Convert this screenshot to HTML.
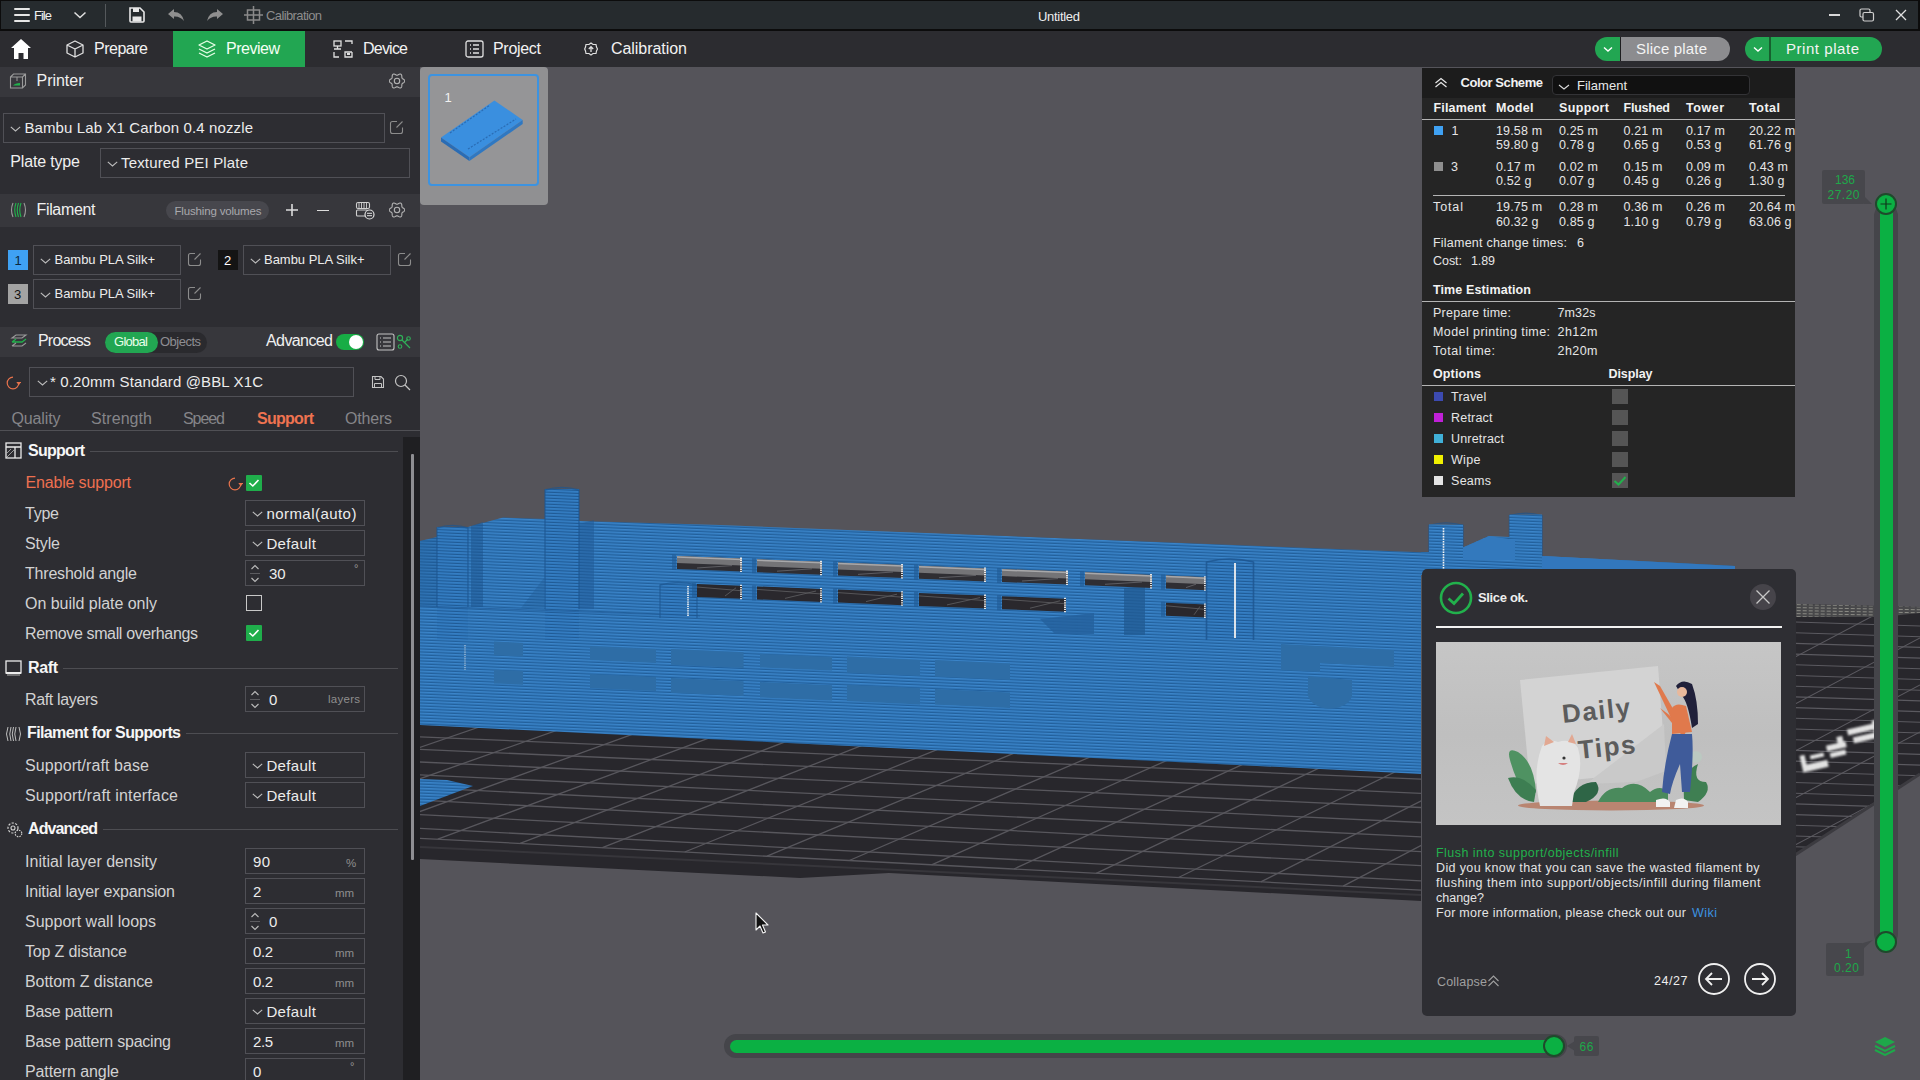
<!DOCTYPE html>
<html><head><meta charset="utf-8"><style>
html,body{margin:0;padding:0;width:1920px;height:1080px;overflow:hidden;background:#55545a;}
body{position:relative;font-family:"Liberation Sans",sans-serif;}
body>div,body>svg{position:absolute;}
</style></head><body>
<div style="left:420px;top:67px;width:1500px;height:1013px;background:#55545a;"></div>
<svg style="left:420px;top:67px;" width="1500" height="1013" viewBox="0 0 1500 1013"><defs>
<pattern id="st" width="40" height="3" patternUnits="userSpaceOnUse" patternTransform="rotate(2.4)">
<rect width="40" height="3" fill="#3b85ca"/><rect y="1.6" width="40" height="1.4" fill="#22609c"/></pattern>
<pattern id="st2" width="40" height="3" patternUnits="userSpaceOnUse" patternTransform="rotate(2.4)">
<rect width="40" height="3" fill="#3079bf"/><rect y="2" width="40" height="1" fill="#1d5690"/></pattern>
<clipPath id="bedclip"><polygon points="0.0,633.0 1001.0,683.0 1001.0,834.0 469.0,806.0 380.0,811.0 0.0,792.0"/></clipPath>
</defs><polygon points="0.0,633.0 1001.0,683.0 1001.0,834.0 469.0,806.0 380.0,811.0 0.0,792.0" fill="#28272c" /><g clip-path="url(#bedclip)" stroke="#58575d" stroke-width="1.3"><line x1="0" y1="669.8" x2="1001" y2="712.2"/><line x1="0" y1="682.4" x2="1001" y2="726.3"/><line x1="0" y1="695.0" x2="1001" y2="740.5"/><line x1="0" y1="707.8" x2="1001" y2="755.5"/><line x1="0" y1="720.7" x2="1001" y2="769.9"/><line x1="0" y1="733.2" x2="1001" y2="784.7"/><line x1="0" y1="747.6" x2="1001" y2="798.6"/><line x1="0" y1="761.4" x2="1001" y2="813.9"/><line x1="0" y1="771.3" x2="1001" y2="823.1"/><line x1="137.3" y1="633" x2="-229.1" y2="759.4"/><line x1="222.4" y1="633" x2="-146.8" y2="763.7"/><line x1="306.9" y1="633" x2="-64.5" y2="767.9"/><line x1="390.8" y1="633" x2="17.8" y2="772.2"/><line x1="474.3" y1="633" x2="100.1" y2="776.4"/><line x1="557.1" y1="633" x2="182.4" y2="780.7"/><line x1="639.4" y1="633" x2="264.7" y2="785.0"/><line x1="721.2" y1="633" x2="347.0" y2="789.2"/><line x1="802.5" y1="633" x2="429.3" y2="793.5"/><line x1="883.2" y1="633" x2="511.6" y2="797.8"/><line x1="963.5" y1="633" x2="593.9" y2="802.0"/><line x1="1043.2" y1="633" x2="676.2" y2="806.3"/><line x1="1122.4" y1="633" x2="758.5" y2="810.5"/><line x1="1201.1" y1="633" x2="840.8" y2="814.8"/><line x1="1279.3" y1="633" x2="923.1" y2="819.1"/><line x1="1357.0" y1="633" x2="1005.4" y2="823.3"/><line x1="1434.2" y1="633" x2="1087.7" y2="827.6"/></g><line x1="0.0" y1="780.0" x2="1001.0" y2="828.0" stroke="#37363b" stroke-width="2" clip-path="url(#bedclip)"/><polygon points="0.0,712.0 27.0,713.0 53.0,719.0 0.0,739.0" fill="url(#st)" /><polygon points="1375.0,537.0 1500.0,540.0 1500.0,707.0 1375.0,788.0" fill="#28272c" /><clipPath id="rbclip"><polygon points="1375.0,537.0 1500.0,540.0 1500.0,707.0 1375.0,788.0"/></clipPath><g clip-path="url(#rbclip)" stroke="#5b5a60" stroke-width="1.1"><line x1="1375" y1="555.0" x2="1500" y2="559.0"/><line x1="1375" y1="565.7" x2="1500" y2="569.7"/><line x1="1375" y1="576.4" x2="1500" y2="580.4"/><line x1="1375" y1="587.1" x2="1500" y2="591.1"/><line x1="1375" y1="597.8" x2="1500" y2="601.8"/><line x1="1375" y1="608.5" x2="1500" y2="612.5"/><line x1="1375" y1="619.2" x2="1500" y2="623.2"/><line x1="1375" y1="629.9" x2="1500" y2="633.9"/><line x1="1375" y1="640.6" x2="1500" y2="644.6"/><line x1="1375" y1="651.3" x2="1500" y2="655.3"/><line x1="1375" y1="662.0" x2="1500" y2="666.0"/><line x1="1375" y1="672.7" x2="1500" y2="676.7"/><line x1="1375" y1="683.4" x2="1500" y2="687.4"/><line x1="1375" y1="694.1" x2="1500" y2="698.1"/><line x1="1375" y1="704.8" x2="1500" y2="708.8"/><line x1="1375" y1="715.5" x2="1500" y2="719.5"/><line x1="1375" y1="726.2" x2="1500" y2="730.2"/><line x1="1375" y1="736.9" x2="1500" y2="740.9"/><line x1="1375" y1="747.6" x2="1500" y2="751.6"/><line x1="1375" y1="758.3" x2="1500" y2="762.3"/><line x1="1375" y1="769.0" x2="1500" y2="773.0"/><line x1="1375" y1="779.7" x2="1500" y2="783.7"/><line x1="1375" y1="449.0" x2="1500" y2="383.0"/><line x1="1375" y1="496.0" x2="1500" y2="430.0"/><line x1="1375" y1="543.0" x2="1500" y2="477.0"/><line x1="1375" y1="590.0" x2="1500" y2="524.0"/><line x1="1375" y1="637.0" x2="1500" y2="571.0"/><line x1="1375" y1="684.0" x2="1500" y2="618.0"/><line x1="1375" y1="731.0" x2="1500" y2="665.0"/><line x1="1375" y1="778.0" x2="1500" y2="712.0"/><line x1="1375" y1="825.0" x2="1500" y2="759.0"/></g><pattern id="fb" width="6" height="3" patternUnits="userSpaceOnUse" patternTransform="rotate(1)"><rect width="6" height="3" fill="#48484a"/><rect width="4" height="1" fill="#8a8a84"/></pattern><polygon points="1375.0,537.0 1500.0,540.0 1500.0,546.0 1460.0,550.0 1375.0,550.0" fill="url(#fb)" /><line x1="1375.0" y1="788.0" x2="1500.0" y2="707.0" stroke="#3c3b40" stroke-width="3" /><filter id="blr" x="-20%" y="-50%" width="140%" height="200%"><feGaussianBlur stdDeviation="1.3"/></filter><g transform="translate(1377,669) rotate(-13)" filter="url(#blr)" fill="#e2e2e2"><rect x="-2" y="30" width="26" height="7"/><rect x="-2" y="20" width="5" height="12"/><rect x="8" y="22" width="14" height="4"/><rect x="26" y="16" width="20" height="6"/><rect x="38" y="10" width="6" height="12"/><rect x="28" y="24" width="16" height="5"/><rect x="50" y="5" width="30" height="6"/><rect x="54" y="14" width="24" height="6"/><rect x="76" y="2" width="6" height="14"/></g><polygon points="0.0,474.0 17.0,470.0 17.0,460.0 48.0,460.0 83.0,450.5 125.0,452.0 125.0,422.0 159.0,422.0 159.0,454.0 300.0,458.0 1001.0,485.3 1001.0,707.0 0.0,658.0" fill="url(#st)" /><polygon points="17.0,460.0 48.0,460.0 48.0,573.0 17.0,573.0" fill="url(#st2)" opacity="0.55"/><polygon points="125.0,422.0 159.0,422.0 159.0,573.0 125.0,573.0" fill="url(#st2)" opacity="0.55"/><polygon points="51.0,459.0 63.0,455.0 63.0,540.0 51.0,540.0" fill="#1d5590" opacity="0.55"/><polygon points="159.0,457.0 174.0,453.0 174.0,542.0 159.0,542.0" fill="#1d5590" opacity="0.45"/><polygon points="0.0,474.0 17.0,470.0 17.0,539.0 0.0,539.0" fill="#1d5590" opacity="0.35"/><polygon points="101.0,541.0 124.0,511.0 124.0,541.0" fill="#1d5590" opacity="0.3"/><line x1="0" y1="539" x2="280" y2="549" stroke="#1d5590" stroke-width="1" opacity="0.6"/><polygon points="620.0,552.0 674.0,546.0 674.0,567.0 635.0,567.0" fill="#24609c" opacity="0.8"/><polygon points="704.0,521.0 725.0,519.0 725.0,568.0 704.0,568.0" fill="#1f5890" opacity="0.7"/><polygon points="240.0,517.0 277.0,517.0 277.0,551.0 240.0,551.0" fill="url(#st2)" opacity="0.55"/><path d="M240 551 V518 Q258 513 277 518 V551" fill="none" stroke="#1d5590" stroke-width="1.3" opacity="0.7"/><line x1="268.0" y1="519.0" x2="268.0" y2="549.0" stroke="#f4f4f4" stroke-width="1.6" stroke-dasharray="1.3 0.9"/><line x1="45.0" y1="578.0" x2="45.0" y2="603.0" stroke="#e8e8e8" stroke-width="1.2" stroke-dasharray="1.2 1" opacity="0.7"/><polygon points="257.0,489.0 322.0,491.6 322.0,504.6 257.0,502.0" fill="#2f2e33" /><polygon points="257.0,489.0 322.0,491.6 322.0,498.6 257.0,496.0" fill="#747477" /><line x1="257.0" y1="490.0" x2="322.0" y2="492.6" stroke="#a8a8aa" stroke-width="1.5"/><line x1="277.0" y1="501.0" x2="312.0" y2="498.6" stroke="#6a6a6e" stroke-width="0.8"/><line x1="321.0" y1="490.6" x2="321.0" y2="505.6" stroke="#f4f4f4" stroke-width="1.8" stroke-dasharray="1.3 0.9"/><rect x="252.0" y="488.0" width="4" height="15" fill="#1f5a95" opacity="0.6"/><polygon points="337.0,492.2 402.0,494.8 402.0,507.8 337.0,505.2" fill="#2f2e33" /><polygon points="337.0,492.2 402.0,494.8 402.0,501.8 337.0,499.2" fill="#747477" /><line x1="337.0" y1="493.2" x2="402.0" y2="495.8" stroke="#a8a8aa" stroke-width="1.5"/><line x1="357.0" y1="504.2" x2="392.0" y2="501.8" stroke="#6a6a6e" stroke-width="0.8"/><line x1="401.0" y1="493.8" x2="401.0" y2="508.8" stroke="#f4f4f4" stroke-width="1.8" stroke-dasharray="1.3 0.9"/><rect x="332.0" y="491.2" width="4" height="15" fill="#1f5a95" opacity="0.6"/><polygon points="418.0,495.4 483.0,498.0 483.0,511.0 418.0,508.4" fill="#2f2e33" /><polygon points="418.0,495.4 483.0,498.0 483.0,505.0 418.0,502.4" fill="#747477" /><line x1="418.0" y1="496.4" x2="483.0" y2="499.0" stroke="#a8a8aa" stroke-width="1.5"/><line x1="438.0" y1="507.4" x2="473.0" y2="505.0" stroke="#6a6a6e" stroke-width="0.8"/><line x1="482.0" y1="497.0" x2="482.0" y2="512.0" stroke="#f4f4f4" stroke-width="1.8" stroke-dasharray="1.3 0.9"/><rect x="413.0" y="494.4" width="4" height="15" fill="#1f5a95" opacity="0.6"/><polygon points="499.0,498.7 566.0,501.4 566.0,514.4 499.0,511.7" fill="#2f2e33" /><polygon points="499.0,498.7 566.0,501.4 566.0,508.4 499.0,505.7" fill="#747477" /><line x1="499.0" y1="499.7" x2="566.0" y2="502.4" stroke="#a8a8aa" stroke-width="1.5"/><line x1="519.0" y1="510.7" x2="556.0" y2="508.4" stroke="#6a6a6e" stroke-width="0.8"/><line x1="565.0" y1="500.4" x2="565.0" y2="515.4" stroke="#f4f4f4" stroke-width="1.8" stroke-dasharray="1.3 0.9"/><rect x="494.0" y="497.7" width="4" height="15" fill="#1f5a95" opacity="0.6"/><polygon points="582.0,502.0 648.0,504.6 648.0,517.6 582.0,515.0" fill="#2f2e33" /><polygon points="582.0,502.0 648.0,504.6 648.0,511.6 582.0,509.0" fill="#747477" /><line x1="582.0" y1="503.0" x2="648.0" y2="505.6" stroke="#a8a8aa" stroke-width="1.5"/><line x1="602.0" y1="514.0" x2="638.0" y2="511.6" stroke="#6a6a6e" stroke-width="0.8"/><line x1="647.0" y1="503.6" x2="647.0" y2="518.6" stroke="#f4f4f4" stroke-width="1.8" stroke-dasharray="1.3 0.9"/><rect x="577.0" y="501.0" width="4" height="15" fill="#1f5a95" opacity="0.6"/><polygon points="665.0,505.3 732.0,508.0 732.0,521.0 665.0,518.3" fill="#2f2e33" /><polygon points="665.0,505.3 732.0,508.0 732.0,515.0 665.0,512.3" fill="#747477" /><line x1="665.0" y1="506.3" x2="732.0" y2="509.0" stroke="#a8a8aa" stroke-width="1.5"/><line x1="685.0" y1="517.3" x2="722.0" y2="515.0" stroke="#6a6a6e" stroke-width="0.8"/><line x1="731.0" y1="507.0" x2="731.0" y2="522.0" stroke="#f4f4f4" stroke-width="1.8" stroke-dasharray="1.3 0.9"/><rect x="660.0" y="504.3" width="4" height="15" fill="#1f5a95" opacity="0.6"/><polygon points="746.0,508.6 786.0,510.2 786.0,523.2 746.0,521.6" fill="#2f2e33" /><polygon points="746.0,508.6 786.0,510.2 786.0,517.2 746.0,515.6" fill="#747477" /><line x1="746.0" y1="509.6" x2="786.0" y2="511.2" stroke="#a8a8aa" stroke-width="1.5"/><line x1="766.0" y1="520.6" x2="776.0" y2="517.2" stroke="#6a6a6e" stroke-width="0.8"/><line x1="785.0" y1="509.2" x2="785.0" y2="524.2" stroke="#f4f4f4" stroke-width="1.8" stroke-dasharray="1.3 0.9"/><rect x="741.0" y="507.6" width="4" height="15" fill="#1f5a95" opacity="0.6"/><polygon points="277.0,517.0 322.0,518.8 322.0,531.8 277.0,530.0" fill="#2a282d" /><line x1="277.0" y1="520.0" x2="322.0" y2="523.8" stroke="#5a5a5e" stroke-width="0.9"/><line x1="305.0" y1="529.0" x2="316.0" y2="520.8" stroke="#5a5a5e" stroke-width="0.9"/><line x1="321.0" y1="517.8" x2="321.0" y2="532.8" stroke="#f4f4f4" stroke-width="1.8" stroke-dasharray="1.3 0.9"/><rect x="272.0" y="516.0" width="4" height="15" fill="#1f5a95" opacity="0.6"/><polygon points="337.0,519.4 402.0,522.0 402.0,535.0 337.0,532.4" fill="#2a282d" /><line x1="337.0" y1="522.4" x2="402.0" y2="527.0" stroke="#5a5a5e" stroke-width="0.9"/><line x1="365.0" y1="531.4" x2="396.0" y2="524.0" stroke="#5a5a5e" stroke-width="0.9"/><line x1="401.0" y1="521.0" x2="401.0" y2="536.0" stroke="#f4f4f4" stroke-width="1.8" stroke-dasharray="1.3 0.9"/><rect x="332.0" y="518.4" width="4" height="15" fill="#1f5a95" opacity="0.6"/><polygon points="418.0,522.6 483.0,525.2 483.0,538.2 418.0,535.6" fill="#2a282d" /><line x1="418.0" y1="525.6" x2="483.0" y2="530.2" stroke="#5a5a5e" stroke-width="0.9"/><line x1="446.0" y1="534.6" x2="477.0" y2="527.2" stroke="#5a5a5e" stroke-width="0.9"/><line x1="482.0" y1="524.2" x2="482.0" y2="539.2" stroke="#f4f4f4" stroke-width="1.8" stroke-dasharray="1.3 0.9"/><rect x="413.0" y="521.6" width="4" height="15" fill="#1f5a95" opacity="0.6"/><polygon points="499.0,525.9 566.0,528.6 566.0,541.6 499.0,538.9" fill="#2a282d" /><line x1="499.0" y1="528.9" x2="566.0" y2="533.6" stroke="#5a5a5e" stroke-width="0.9"/><line x1="527.0" y1="537.9" x2="560.0" y2="530.6" stroke="#5a5a5e" stroke-width="0.9"/><line x1="565.0" y1="527.6" x2="565.0" y2="542.6" stroke="#f4f4f4" stroke-width="1.8" stroke-dasharray="1.3 0.9"/><rect x="494.0" y="524.9" width="4" height="15" fill="#1f5a95" opacity="0.6"/><polygon points="582.0,529.2 646.0,531.8 646.0,544.8 582.0,542.2" fill="#2a282d" /><line x1="582.0" y1="532.2" x2="646.0" y2="536.8" stroke="#5a5a5e" stroke-width="0.9"/><line x1="610.0" y1="541.2" x2="640.0" y2="533.8" stroke="#5a5a5e" stroke-width="0.9"/><line x1="645.0" y1="530.8" x2="645.0" y2="545.8" stroke="#f4f4f4" stroke-width="1.8" stroke-dasharray="1.3 0.9"/><rect x="577.0" y="528.2" width="4" height="15" fill="#1f5a95" opacity="0.6"/><polygon points="746.0,535.8 786.0,537.4 786.0,550.4 746.0,548.8" fill="#2a282d" /><line x1="746.0" y1="538.8" x2="786.0" y2="542.4" stroke="#5a5a5e" stroke-width="0.9"/><line x1="774.0" y1="547.8" x2="780.0" y2="539.4" stroke="#5a5a5e" stroke-width="0.9"/><line x1="785.0" y1="536.4" x2="785.0" y2="551.4" stroke="#f4f4f4" stroke-width="1.8" stroke-dasharray="1.3 0.9"/><rect x="741.0" y="534.8" width="4" height="15" fill="#1f5a95" opacity="0.6"/><polygon points="787.0,494.0 833.0,494.0 833.0,572.0 787.0,572.0" fill="url(#st2)" opacity="0.5"/><path d="M786.5 573 V495 Q810 489 833.5 495 V573" fill="none" stroke="#1d5590" stroke-width="1.6" opacity="0.8"/><path d="M17 540 V461 Q32.5 456 48 461 V540" fill="none" stroke="#1d5590" stroke-width="1.4" opacity="0.7"/><path d="M125 542 V423 Q142.0 418 159 423 V542" fill="none" stroke="#1d5590" stroke-width="1.4" opacity="0.7"/><path d="M1009 503 V458.4 Q1026.0 453.4 1043 458.4 V503" fill="none" stroke="#1d5590" stroke-width="1.4" opacity="0.7"/><path d="M1089.5 489 V448.6 Q1105.75 443.6 1122 448.6 V489" fill="none" stroke="#1d5590" stroke-width="1.4" opacity="0.7"/><line x1="815.0" y1="496.0" x2="815.0" y2="571.0" stroke="#f0f0f0" stroke-width="1.8" /><polygon points="74.0,574.6 103.0,575.9 103.0,589.6 74.0,588.3" fill="#2e6da6" /><polygon points="170.0,579.0 236.0,582.0 236.0,596.0 170.0,593.0" fill="#2e6da6" /><polygon points="251.0,582.0 323.6,585.3 323.6,601.0 251.0,597.7" fill="#2e6da6" /><polygon points="340.0,586.8 412.0,590.0 412.0,603.6 340.0,600.4" fill="#2e6da6" /><polygon points="427.0,589.6 500.0,592.9 500.0,609.0 427.0,605.7" fill="#2e6da6" /><polygon points="515.0,593.0 590.0,596.4 590.0,613.0 515.0,609.6" fill="#2e6da6" /><polygon points="74.0,602.7 103.0,604.0 103.0,617.7 74.0,616.4" fill="#2e6da6" /><polygon points="170.0,607.0 236.0,610.0 236.0,624.0 170.0,621.0" fill="#2e6da6" /><polygon points="251.0,611.0 323.6,614.3 323.6,629.0 251.0,625.7" fill="#2e6da6" /><polygon points="340.0,615.0 412.0,618.2 412.0,633.6 340.0,630.4" fill="#2e6da6" /><polygon points="427.0,617.7 500.0,621.0 500.0,637.4 427.0,634.1" fill="#2e6da6" /><polygon points="515.0,622.0 590.0,625.4 590.0,641.0 515.0,637.6" fill="#2e6da6" /><polygon points="861.0,577.0 974.0,583.0 974.0,600.0 900.0,596.0 900.0,605.0 861.0,603.0" fill="#2e6da6" /><path d="M888 623 A20 14 0 0 0 932 629 L932 613 L888 609 Z" fill="#2e6da6"/><polygon points="1001.0,485.0 1009.0,485.0 1009.0,457.4 1043.0,457.4 1043.0,480.5 1069.0,469.0 1089.5,470.0 1089.5,447.6 1122.0,447.6 1122.0,489.0 1315.0,499.0 1315.0,508.0 1001.0,508.0" fill="url(#st)" /><polygon points="1122.0,489.0 1315.0,499.0 1315.0,508.0 1122.0,508.0" fill="#3277bd" /><polygon points="1043.0,480.5 1069.0,469.0 1095.0,473.0 1095.0,493.0 1043.0,493.0" fill="#3379bd" /><line x1="1023.5" y1="461.0" x2="1023.5" y2="503.0" stroke="#f4f4f4" stroke-width="1.6" stroke-dasharray="1.6 1"/></svg>
<div style="left:420px;top:67px;width:128px;height:138px;background:#909092;border-radius:4px"></div>
<div style="left:428px;top:74px;width:111px;height:112px;box-sizing:border-box;border:2.5px solid #3d93e0;border-radius:4px;background:#959597"></div>
<div style="left:444.50px;top:91px;font-size:13px;line-height:13px;color:#f2f2f2;white-space:pre;">1</div>
<svg style="left:438px;top:97px;" width="88" height="68" viewBox="0 0 88 68"><polygon points="3,40.6 56.4,3.5 84.7,23 31.4,60.2" fill="#3a8fdf"/><polygon points="3,40.6 31.4,60.2 31.4,64 3,44.6" fill="#2a6cb4"/><polygon points="31.4,60.2 84.7,23 84.7,27 31.4,64" fill="#2f78c2"/><path d="M12 36 L52 8 M30 52 L78 22" stroke="#2a6cb4" stroke-width="1.2" stroke-dasharray="2 1.5"/></svg>
<div style="left:1422px;top:68px;width:373px;height:429px;background:#252525;"></div>
<div style="left:1422px;top:68px;width:373px;height:30px;background:#1c1c1c;"></div>
<svg style="left:1434px;top:77px;" width="14" height="11" viewBox="0 0 14 11"><path d="M1.5 6 L7 1.5 L12.5 6 M1.5 10 L7 5.5 L12.5 10" fill="none" stroke="#e8e8e8" stroke-width="1.2"/></svg>
<div style="left:1460.50px;top:76px;font-size:13px;line-height:13px;color:#f2f2f2;font-weight:bold;letter-spacing:-0.447px;white-space:pre;">Color Scheme</div>
<div style="left:1552px;top:75px;width:198px;height:20px;box-sizing:border-box;border:1px solid #333336;border-radius:4px;background:#111111"></div>
<svg style="left:1558px;top:84px;" width="12" height="6" viewBox="0 0 12 6"><path d="M1 1 L6 5 L11 1" fill="none" stroke="#dddddd" stroke-width="1.1"/></svg>
<div style="left:1577.00px;top:79px;font-size:13px;line-height:13px;color:#e8e8e8;letter-spacing:0.021px;white-space:pre;">Filament</div>
<div style="left:1433.60px;top:102px;font-size:12.5px;line-height:12.5px;color:#f2f2f2;font-weight:bold;letter-spacing:0.143px;white-space:pre;">Filament</div>
<div style="left:1496.00px;top:102px;font-size:12.5px;line-height:12.5px;color:#f2f2f2;font-weight:bold;letter-spacing:0.348px;white-space:pre;">Model</div>
<div style="left:1559.00px;top:102px;font-size:12.5px;line-height:12.5px;color:#f2f2f2;font-weight:bold;letter-spacing:0.349px;white-space:pre;">Support</div>
<div style="left:1623.50px;top:102px;font-size:12.5px;line-height:12.5px;color:#f2f2f2;font-weight:bold;letter-spacing:-0.237px;white-space:pre;">Flushed</div>
<div style="left:1686.00px;top:102px;font-size:12.5px;line-height:12.5px;color:#f2f2f2;font-weight:bold;letter-spacing:0.529px;white-space:pre;">Tower</div>
<div style="left:1749.00px;top:102px;font-size:12.5px;line-height:12.5px;color:#f2f2f2;font-weight:bold;letter-spacing:0.517px;white-space:pre;">Total</div>
<div style="left:1422px;top:119px;width:373px;height:1px;background:#b4b4b4;"></div>
<div style="left:1434px;top:126px;width:9px;height:9px;background:#3fa1f3;"></div>
<div style="left:1451.50px;top:125px;font-size:12.5px;line-height:12.5px;color:#e6e6e6;white-space:pre;">1</div>
<div style="left:1434px;top:162px;width:9px;height:9px;background:#8f8f8f;"></div>
<div style="left:1451.00px;top:161px;font-size:12.5px;line-height:12.5px;color:#e6e6e6;white-space:pre;">3</div>
<div style="left:1433.00px;top:201px;font-size:12.5px;line-height:12.5px;color:#e6e6e6;letter-spacing:0.899px;white-space:pre;">Total</div>
<div style="left:1496.00px;top:125px;font-size:12.5px;line-height:12.5px;color:#e6e6e6;letter-spacing:0.151px;white-space:pre;">19.58 m</div>
<div style="left:1496.00px;top:139px;font-size:12.5px;line-height:12.5px;color:#e6e6e6;letter-spacing:0.139px;white-space:pre;">59.80 g</div>
<div style="left:1496.00px;top:161px;font-size:12.5px;line-height:12.5px;color:#e6e6e6;letter-spacing:0.153px;white-space:pre;">0.17 m</div>
<div style="left:1496.00px;top:175px;font-size:12.5px;line-height:12.5px;color:#e6e6e6;letter-spacing:0.139px;white-space:pre;">0.52 g</div>
<div style="left:1496.00px;top:201px;font-size:12.5px;line-height:12.5px;color:#e6e6e6;letter-spacing:0.151px;white-space:pre;">19.75 m</div>
<div style="left:1496.00px;top:216px;font-size:12.5px;line-height:12.5px;color:#e6e6e6;letter-spacing:0.139px;white-space:pre;">60.32 g</div>
<div style="left:1559.00px;top:125px;font-size:12.5px;line-height:12.5px;color:#e6e6e6;letter-spacing:0.153px;white-space:pre;">0.25 m</div>
<div style="left:1559.00px;top:139px;font-size:12.5px;line-height:12.5px;color:#e6e6e6;letter-spacing:0.139px;white-space:pre;">0.78 g</div>
<div style="left:1559.00px;top:161px;font-size:12.5px;line-height:12.5px;color:#e6e6e6;letter-spacing:0.153px;white-space:pre;">0.02 m</div>
<div style="left:1559.00px;top:175px;font-size:12.5px;line-height:12.5px;color:#e6e6e6;letter-spacing:0.139px;white-space:pre;">0.07 g</div>
<div style="left:1559.00px;top:201px;font-size:12.5px;line-height:12.5px;color:#e6e6e6;letter-spacing:0.153px;white-space:pre;">0.28 m</div>
<div style="left:1559.00px;top:216px;font-size:12.5px;line-height:12.5px;color:#e6e6e6;letter-spacing:0.139px;white-space:pre;">0.85 g</div>
<div style="left:1623.50px;top:125px;font-size:12.5px;line-height:12.5px;color:#e6e6e6;letter-spacing:0.153px;white-space:pre;">0.21 m</div>
<div style="left:1623.50px;top:139px;font-size:12.5px;line-height:12.5px;color:#e6e6e6;letter-spacing:0.139px;white-space:pre;">0.65 g</div>
<div style="left:1623.50px;top:161px;font-size:12.5px;line-height:12.5px;color:#e6e6e6;letter-spacing:0.153px;white-space:pre;">0.15 m</div>
<div style="left:1623.50px;top:175px;font-size:12.5px;line-height:12.5px;color:#e6e6e6;letter-spacing:0.139px;white-space:pre;">0.45 g</div>
<div style="left:1623.50px;top:201px;font-size:12.5px;line-height:12.5px;color:#e6e6e6;letter-spacing:0.153px;white-space:pre;">0.36 m</div>
<div style="left:1623.50px;top:216px;font-size:12.5px;line-height:12.5px;color:#e6e6e6;letter-spacing:0.139px;white-space:pre;">1.10 g</div>
<div style="left:1686.00px;top:125px;font-size:12.5px;line-height:12.5px;color:#e6e6e6;letter-spacing:0.153px;white-space:pre;">0.17 m</div>
<div style="left:1686.00px;top:139px;font-size:12.5px;line-height:12.5px;color:#e6e6e6;letter-spacing:0.139px;white-space:pre;">0.53 g</div>
<div style="left:1686.00px;top:161px;font-size:12.5px;line-height:12.5px;color:#e6e6e6;letter-spacing:0.153px;white-space:pre;">0.09 m</div>
<div style="left:1686.00px;top:175px;font-size:12.5px;line-height:12.5px;color:#e6e6e6;letter-spacing:0.139px;white-space:pre;">0.26 g</div>
<div style="left:1686.00px;top:201px;font-size:12.5px;line-height:12.5px;color:#e6e6e6;letter-spacing:0.153px;white-space:pre;">0.26 m</div>
<div style="left:1686.00px;top:216px;font-size:12.5px;line-height:12.5px;color:#e6e6e6;letter-spacing:0.139px;white-space:pre;">0.79 g</div>
<div style="left:1749.00px;top:125px;font-size:12.5px;line-height:12.5px;color:#e6e6e6;letter-spacing:0.151px;white-space:pre;">20.22 m</div>
<div style="left:1749.00px;top:139px;font-size:12.5px;line-height:12.5px;color:#e6e6e6;letter-spacing:0.139px;white-space:pre;">61.76 g</div>
<div style="left:1749.00px;top:161px;font-size:12.5px;line-height:12.5px;color:#e6e6e6;letter-spacing:0.153px;white-space:pre;">0.43 m</div>
<div style="left:1749.00px;top:175px;font-size:12.5px;line-height:12.5px;color:#e6e6e6;letter-spacing:0.139px;white-space:pre;">1.30 g</div>
<div style="left:1749.00px;top:201px;font-size:12.5px;line-height:12.5px;color:#e6e6e6;letter-spacing:0.151px;white-space:pre;">20.64 m</div>
<div style="left:1749.00px;top:216px;font-size:12.5px;line-height:12.5px;color:#e6e6e6;letter-spacing:0.139px;white-space:pre;">63.06 g</div>
<div style="left:1433px;top:195px;width:352px;height:1px;background:#b4b4b4;"></div>
<div style="left:1433.00px;top:237px;font-size:12.5px;line-height:12.5px;color:#e6e6e6;letter-spacing:0.227px;white-space:pre;">Filament change times:</div>
<div style="left:1577.00px;top:237px;font-size:12.5px;line-height:12.5px;color:#e6e6e6;white-space:pre;">6</div>
<div style="left:1433.00px;top:255px;font-size:12.5px;line-height:12.5px;color:#e6e6e6;letter-spacing:-0.044px;white-space:pre;">Cost:</div>
<div style="left:1471.00px;top:255px;font-size:12.5px;line-height:12.5px;color:#e6e6e6;letter-spacing:-0.110px;white-space:pre;">1.89</div>
<div style="left:1433.00px;top:284px;font-size:12.5px;line-height:12.5px;color:#f2f2f2;font-weight:bold;letter-spacing:0.120px;white-space:pre;">Time Estimation</div>
<div style="left:1422px;top:301px;width:373px;height:1px;background:#b4b4b4;"></div>
<div style="left:1433.00px;top:307px;font-size:12.5px;line-height:12.5px;color:#e6e6e6;letter-spacing:0.247px;white-space:pre;">Prepare time:</div>
<div style="left:1557.50px;top:307px;font-size:12.5px;line-height:12.5px;color:#e6e6e6;letter-spacing:0.120px;white-space:pre;">7m32s</div>
<div style="left:1433.00px;top:326px;font-size:12.5px;line-height:12.5px;color:#e6e6e6;letter-spacing:0.417px;white-space:pre;">Model printing time:</div>
<div style="left:1557.50px;top:326px;font-size:12.5px;line-height:12.5px;color:#e6e6e6;letter-spacing:0.445px;white-space:pre;">2h12m</div>
<div style="left:1433.00px;top:345px;font-size:12.5px;line-height:12.5px;color:#e6e6e6;letter-spacing:0.504px;white-space:pre;">Total time:</div>
<div style="left:1557.50px;top:345px;font-size:12.5px;line-height:12.5px;color:#e6e6e6;letter-spacing:0.445px;white-space:pre;">2h20m</div>
<div style="left:1433.00px;top:368px;font-size:12.5px;line-height:12.5px;color:#f2f2f2;font-weight:bold;letter-spacing:0.130px;white-space:pre;">Options</div>
<div style="left:1608.50px;top:368px;font-size:12.5px;line-height:12.5px;color:#f2f2f2;font-weight:bold;letter-spacing:-0.077px;white-space:pre;">Display</div>
<div style="left:1422px;top:385px;width:373px;height:1px;background:#b4b4b4;"></div>
<div style="left:1434px;top:392px;width:9px;height:9px;background:#3c4ab0;"></div>
<div style="left:1451.00px;top:391px;font-size:12.5px;line-height:12.5px;color:#e6e6e6;letter-spacing:0.206px;white-space:pre;">Travel</div>
<div style="left:1612px;top:389px;width:16px;height:15px;background:#555555;"></div>
<div style="left:1434px;top:413px;width:9px;height:9px;background:#c020d8;"></div>
<div style="left:1451.00px;top:412px;font-size:12.5px;line-height:12.5px;color:#e6e6e6;letter-spacing:0.201px;white-space:pre;">Retract</div>
<div style="left:1612px;top:410px;width:16px;height:15px;background:#555555;"></div>
<div style="left:1434px;top:434px;width:9px;height:9px;background:#40b0d8;"></div>
<div style="left:1451.00px;top:433px;font-size:12.5px;line-height:12.5px;color:#e6e6e6;letter-spacing:0.193px;white-space:pre;">Unretract</div>
<div style="left:1612px;top:431px;width:16px;height:15px;background:#555555;"></div>
<div style="left:1434px;top:455px;width:9px;height:9px;background:#f0f000;"></div>
<div style="left:1451.00px;top:454px;font-size:12.5px;line-height:12.5px;color:#e6e6e6;letter-spacing:0.285px;white-space:pre;">Wipe</div>
<div style="left:1612px;top:452px;width:16px;height:15px;background:#555555;"></div>
<div style="left:1434px;top:476px;width:9px;height:9px;background:#e4e4e4;"></div>
<div style="left:1451.00px;top:475px;font-size:12.5px;line-height:12.5px;color:#e6e6e6;letter-spacing:0.292px;white-space:pre;">Seams</div>
<div style="left:1612px;top:473px;width:16px;height:15px;background:#555555;"></div>
<svg style="left:1612px;top:473px;" width="16" height="15" viewBox="0 0 16 15"><path d="M2.5 8 L6.5 11.5 L13.5 4" fill="none" stroke="#22b14c" stroke-width="2"/></svg>
<div style="left:1421.5px;top:569px;width:374px;height:447px;background:#2e2e33;border-radius:5px"></div>
<svg style="left:1439px;top:581px;" width="34" height="34" viewBox="0 0 34 34"><circle cx="17" cy="17" r="15" fill="none" stroke="#22b14c" stroke-width="2.6"/><path d="M9.5 17.5 L15 22.5 L24 12.5" fill="none" stroke="#22b14c" stroke-width="2.8"/></svg>
<div style="left:1478.00px;top:591px;font-size:13px;line-height:13px;color:#eeeeee;font-weight:bold;letter-spacing:-0.344px;white-space:pre;">Slice ok.</div>
<div style="left:1750px;top:584px;width:26px;height:26px;border-radius:13px;background:#46444a"></div>
<svg style="left:1755px;top:589px;" width="16" height="16" viewBox="0 0 16 16"><path d="M1.5 1.5 L14.5 14.5 M14.5 1.5 L1.5 14.5" stroke="#c8c8c8" stroke-width="1.3"/></svg>
<div style="left:1436px;top:625.5px;width:346px;height:2px;background:#f2f2f2;"></div>
<svg style="left:1436px;top:642px;" width="345" height="183" viewBox="0 0 345 183"><defs><linearGradient id="tg" x1="0" y1="0" x2="0" y2="1"><stop offset="0" stop-color="#c6c6c6"/><stop offset="0.5" stop-color="#bfbfbf"/><stop offset="1" stop-color="#c4c4c4"/></linearGradient></defs>
<rect width="345" height="183" fill="url(#tg)"/>
<polygon points="84,38 222,24 230,129 94,142" fill="#d3d3d3"/>
<polygon points="150,142 228,82 230,129 200,140" fill="#c9c9c9"/>
<text x="127" y="81" font-family="Liberation Sans" font-weight="bold" font-size="26" fill="#5c5c5c" transform="rotate(-6 127 81)" letter-spacing="1.5">Daily</text>
<text x="143" y="117" font-family="Liberation Sans" font-weight="bold" font-size="26" fill="#5c5c5c" transform="rotate(-6 143 117)" letter-spacing="1.5">Tips</text>
<ellipse cx="175" cy="163.5" rx="93" ry="5" fill="#b98571"/>
<path d="M74 118 Q70 104 82 110 Q98 120 100 150 L92 158 Q80 140 74 118 Z" fill="#4f9262"/>
<path d="M72 136 Q86 132 100 148 L98 160 Q80 158 72 136 Z" fill="#3d7e52"/>
<path d="M134 160 Q140 140 160 140 Q168 152 150 160 Z" fill="#2e6546"/>
<path d="M162 160 Q170 144 186 146 Q200 136 214 150 Q224 142 232 150 L232 160 Z" fill="#4a8a5c"/>
<path d="M248 158 Q246 128 262 122 Q256 140 270 140 Q276 150 262 160 Z" fill="#3f7f52"/>
<circle cx="260" cy="115" r="6" fill="#b9cbc0" opacity="0.8"/>
<path d="M104 164 Q96 130 106 104 Q112 96 122 100 Q136 96 142 106 Q148 126 138 150 L136 164 Z" fill="#e4e4e4"/>
<path d="M108 104 L110 94 L118 100 Z M132 100 L136 92 L140 102 Z" fill="#e2a892"/>
<circle cx="128" cy="116" r="1.6" fill="#333"/><path d="M122 121 Q127 125 132 121" fill="#d57f7f"/>
<path d="M218 40 L224 44 L240 72 L236 78 Z" fill="#e0794c"/>
<path d="M224 66 L232 72 L250 88 L248 96 Z" fill="#e0794c"/>
<path d="M236 66 Q240 60 250 64 L256 90 L236 92 Z" fill="#e0794c"/>
<path d="M240 44 Q246 36 256 42 Q262 58 262 82 L256 86 Q252 60 246 54 Z" fill="#20203a"/>
<circle cx="246" cy="50" r="5" fill="#e8b89c"/>
<path d="M236 92 L256 92 Q258 112 254 150 L246 150 L244 122 Q236 140 234 152 L226 150 Q228 122 236 92 Z" fill="#3f5b9a"/>
<path d="M220 158 Q230 154 234 160 L234 165 L220 165 Z M240 158 Q248 154 252 160 L252 166 L238 166 Z" fill="#f2f2f2"/></svg>
<div style="left:1436.00px;top:847px;font-size:12.5px;line-height:12.5px;color:#22b14c;letter-spacing:0.470px;white-space:pre;">Flush into support/objects/infill</div>
<div style="left:1436.00px;top:862px;font-size:12.5px;line-height:12.5px;color:#e4e4e4;letter-spacing:0.369px;white-space:pre;">Did you know that you can save the wasted filament by</div>
<div style="left:1436.00px;top:877px;font-size:12.5px;line-height:12.5px;color:#e4e4e4;letter-spacing:0.497px;white-space:pre;">flushing them into support/objects/infill during filament</div>
<div style="left:1436.00px;top:892px;font-size:12.5px;line-height:12.5px;color:#e4e4e4;white-space:pre;">change?</div>
<div style="left:1436.00px;top:907px;font-size:12.5px;line-height:12.5px;color:#e4e4e4;letter-spacing:0.285px;white-space:pre;">For more information, please check out our</div>
<div style="left:1692.00px;top:907px;font-size:12.5px;line-height:12.5px;color:#3c93e0;letter-spacing:0.466px;white-space:pre;">Wiki</div>
<div style="left:1437.00px;top:976px;font-size:12.5px;line-height:12.5px;color:#a0a0a0;letter-spacing:0.194px;white-space:pre;">Collapse</div>
<svg style="left:1487px;top:974px;" width="13" height="14" viewBox="0 0 13 14"><path d="M1.5 7 L6.5 2 L11.5 7 M1.5 12 L6.5 7 L11.5 12" fill="none" stroke="#a0a0a0" stroke-width="1.1"/></svg>
<div style="left:1654.00px;top:975px;font-size:12.5px;line-height:12.5px;color:#eeeeee;letter-spacing:0.555px;white-space:pre;">24/27</div>
<svg style="left:1698px;top:963px;" width="32" height="32" viewBox="0 0 32 32"><circle cx="16" cy="16" r="15" fill="none" stroke="#f0f0f0" stroke-width="1.8"/><path d="M8 16 H24 M14 10 L8 16 L14 22" fill="none" stroke="#f0f0f0" stroke-width="1.8"/></svg>
<svg style="left:1744px;top:963px;" width="32" height="32" viewBox="0 0 32 32"><circle cx="16" cy="16" r="15" fill="none" stroke="#f0f0f0" stroke-width="1.8"/><path d="M8 16 H24 M18 10 L24 16 L18 22" fill="none" stroke="#f0f0f0" stroke-width="1.8"/></svg>
<div style="left:1874px;top:204px;width:24px;height:742px;background:#45454a;border-radius:12px"></div>
<div style="left:1880px;top:210px;width:12.5px;height:730px;background:#0bb043;"></div>
<div style="left:1875px;top:193px;width:22px;height:22px;border-radius:11px;background:#0bb043;box-sizing:border-box;border:2px solid #1f4a2c"></div>
<svg style="left:1879px;top:197px;" width="14" height="14" viewBox="0 0 14 14"><path d="M7 1.5 V12.5 M1.5 7 H12.5" stroke="#10361c" stroke-width="1.2"/></svg>
<div style="left:1875px;top:931px;width:22px;height:22px;border-radius:11px;background:#0bb043;box-sizing:border-box;border:2px solid #1f4a2c"></div>
<div style="left:1822px;top:170px;width:43px;height:34px;background:#47474c;border-radius:2px"></div>
<svg style="left:1864px;top:196px;" width="8" height="8" viewBox="0 0 8 8"><path d="M0 0 L8 8 L0 8 Z" fill="#47474c"/></svg>
<div style="left:1835.00px;top:174px;font-size:12px;line-height:12px;color:#1ea84a;letter-spacing:-0.011px;white-space:pre;">136</div>
<div style="left:1827.50px;top:189px;font-size:12px;line-height:12px;color:#1ea84a;letter-spacing:0.492px;white-space:pre;">27.20</div>
<div style="left:1826px;top:943px;width:38px;height:33px;background:#47474c;border-radius:2px"></div>
<svg style="left:1863px;top:940px;" width="10" height="9" viewBox="0 0 10 9"><path d="M0 3 L10 0 L0 9 Z" fill="#47474c"/></svg>
<div style="left:1845.00px;top:948px;font-size:12px;line-height:12px;color:#1ea84a;white-space:pre;">1</div>
<div style="left:1834.00px;top:962px;font-size:12px;line-height:12px;color:#1ea84a;letter-spacing:0.548px;white-space:pre;">0.20</div>
<div style="left:724px;top:1034px;width:843px;height:24px;background:#45454a;border-radius:12px"></div>
<div style="left:730px;top:1039.5px;width:825px;height:13px;background:#0bb043;border-radius:6.5px"></div>
<div style="left:1543px;top:1035px;width:22px;height:22px;border-radius:11px;background:#0bb043;box-sizing:border-box;border:2px solid #1f4a2c"></div>
<div style="left:1574px;top:1036px;width:25px;height:20px;background:#47474c;border-radius:2px"></div>
<svg style="left:1567px;top:1041px;" width="8" height="10" viewBox="0 0 8 10"><path d="M8 0 L0 5 L8 10 Z" fill="#47474c"/></svg>
<div style="left:1579.50px;top:1041px;font-size:12px;line-height:12px;color:#1ea84a;letter-spacing:0.652px;white-space:pre;">66</div>
<svg style="left:1874px;top:1036px;" width="22" height="20" viewBox="0 0 22 20"><path d="M11 1 L21 6 L11 11 L1 6 Z" fill="#1ea84a"/><path d="M1 10 L11 15 L21 10" fill="none" stroke="#1ea84a" stroke-width="2"/><path d="M1 14 L11 19 L21 14" fill="none" stroke="#1ea84a" stroke-width="2"/></svg>
<svg style="left:755px;top:912px;" width="14" height="23" viewBox="0 0 14 23"><path d="M1 1 V18 L5 14 L8 21 L10.5 20 L7.5 13 H13 Z" fill="#111" stroke="#f4f4f4" stroke-width="1.1" stroke-linejoin="round"/></svg>
<div style="left:0px;top:67px;width:420px;height:1013px;background:#2d2d32;"></div>
<div style="left:0px;top:67px;width:420px;height:30px;background:#37373c;"></div>
<svg style="left:9px;top:73px;" width="18" height="16" viewBox="0 0 18 16"><path d="M1.5 4 L4.5 1 H16.5 V12 L13.5 15 H1.5 Z M1.5 4 H13.5 V15 M13.5 4 L16.5 1" fill="none" stroke="#9a9a9a" stroke-width="1.1"/><path d="M4 12.5 Q6 10 11 10 V12.5 Z" fill="#22b14c"/><path d="M8 4 V8" stroke="#9a9a9a" stroke-width="1"/></svg>
<div style="left:36.50px;top:73px;font-size:16px;line-height:16px;color:#f0f0f0;letter-spacing:-0.021px;white-space:pre;">Printer</div>
<svg style="left:389px;top:73px;" width="16" height="16" viewBox="0 0 16 16"><path d="M15.80 8.00 L15.71 8.51 L15.44 8.98 L15.04 9.40 L14.57 9.76 L14.08 10.06 L13.63 10.33 L13.27 10.60 L13.02 10.90 L12.89 11.26 L12.83 11.71 L12.82 12.23 L12.81 12.81 L12.74 13.40 L12.57 13.96 L12.29 14.42 L11.90 14.75 L11.42 14.93 L10.87 14.94 L10.31 14.80 L9.76 14.57 L9.25 14.29 L8.80 14.04 L8.38 13.86 L8.00 13.80 L7.62 13.86 L7.20 14.04 L6.75 14.29 L6.24 14.57 L5.69 14.80 L5.13 14.94 L4.58 14.93 L4.10 14.75 L3.71 14.42 L3.43 13.96 L3.26 13.40 L3.19 12.81 L3.18 12.23 L3.17 11.71 L3.11 11.26 L2.98 10.90 L2.73 10.60 L2.37 10.33 L1.92 10.06 L1.43 9.76 L0.96 9.40 L0.56 8.98 L0.29 8.51 L0.20 8.00 L0.29 7.49 L0.56 7.02 L0.96 6.60 L1.43 6.24 L1.92 5.94 L2.37 5.67 L2.73 5.40 L2.98 5.10 L3.11 4.74 L3.17 4.29 L3.18 3.77 L3.19 3.19 L3.26 2.60 L3.43 2.04 L3.71 1.58 L4.10 1.25 L4.58 1.07 L5.13 1.06 L5.69 1.20 L6.24 1.43 L6.75 1.71 L7.20 1.96 L7.62 2.14 L8.00 2.20 L8.38 2.14 L8.80 1.96 L9.25 1.71 L9.76 1.43 L10.31 1.20 L10.87 1.06 L11.42 1.07 L11.90 1.25 L12.29 1.58 L12.57 2.04 L12.74 2.60 L12.81 3.19 L12.82 3.77 L12.83 4.29 L12.89 4.74 L13.02 5.10 L13.27 5.40 L13.63 5.67 L14.08 5.94 L14.57 6.24 L15.04 6.60 L15.44 7.02 L15.71 7.49 Z" fill="none" stroke="#b4b4b4" stroke-width="1.1"/><circle cx="8.0" cy="8.0" r="2.7" fill="none" stroke="#b4b4b4" stroke-width="1.1"/></svg>
<div style="left:3px;top:113px;width:382px;height:30px;box-sizing:border-box;border:1px solid #505056;background:transparent;"></div>
<svg style="left:10px;top:125.5px;" width="11" height="6" viewBox="0 0 11 6"><path d="M0.8 0.8 L5.5 5 L10.2 0.8" fill="none" stroke="#bdbdbd" stroke-width="1.1"/></svg>
<div style="left:24.40px;top:120px;font-size:15px;line-height:15px;color:#ececec;letter-spacing:0.119px;white-space:pre;">Bambu Lab X1 Carbon 0.4 nozzle</div>
<svg style="left:388.5px;top:119.5px;" width="15" height="15" viewBox="0 0 15 15"><path d="M8 1.5 H3.5 Q1.5 1.5 1.5 3.5 V11.5 Q1.5 13.5 3.5 13.5 H11.5 Q13.5 13.5 13.5 11.5 V7.5" fill="none" stroke="#8c8c8c" stroke-width="1.1"/><path d="M7.5 7.5 L13.5 1.5" stroke="#8c8c8c" stroke-width="1.1"/></svg>
<div style="left:10.30px;top:154px;font-size:16px;line-height:16px;color:#f0f0f0;letter-spacing:-0.162px;white-space:pre;">Plate type</div>
<div style="left:100px;top:148px;width:310px;height:30px;box-sizing:border-box;border:1px solid #505056;background:transparent;"></div>
<svg style="left:107px;top:160.5px;" width="11" height="6" viewBox="0 0 11 6"><path d="M0.8 0.8 L5.5 5 L10.2 0.8" fill="none" stroke="#bdbdbd" stroke-width="1.1"/></svg>
<div style="left:121.00px;top:155px;font-size:15px;line-height:15px;color:#ececec;letter-spacing:0.163px;white-space:pre;">Textured PEI Plate</div>
<div style="left:0px;top:194px;width:420px;height:33px;background:#37373c;"></div>
<svg style="left:10px;top:202px;" width="17" height="16" viewBox="0 0 17 16"><path d="M3 1 Q0 8 3 15 M14 1 Q17 8 14 15" fill="none" stroke="#9a9a9a" stroke-width="1.1"/><path d="M6 1 Q3.5 8 6 15 M8.5 1 Q6 8 8.5 15 M11 1 Q8.5 8 11 15" fill="none" stroke="#22b14c" stroke-width="1.1"/></svg>
<div style="left:36.50px;top:202px;font-size:16px;line-height:16px;color:#f0f0f0;letter-spacing:-0.336px;white-space:pre;">Filament</div>
<div style="left:166px;top:201px;width:103px;height:19px;background:#47474d;border-radius:9.5px"></div>
<div style="left:174.50px;top:206px;font-size:11.5px;line-height:11.5px;color:#a9a9ad;letter-spacing:-0.166px;white-space:pre;">Flushing volumes</div>
<svg style="left:285px;top:203px;" width="14" height="14" viewBox="0 0 14 14"><path d="M7 1 V13 M1 7 H13" stroke="#dcdcdc" stroke-width="1.6"/></svg>
<div style="left:317px;top:209.5px;width:12px;height:1.6px;background:#dcdcdc;"></div>
<svg style="left:355px;top:201px;" width="20" height="19" viewBox="0 0 20 19"><rect x="1.5" y="1.5" width="13" height="6" rx="1.5" fill="none" stroke="#cfcfcf" stroke-width="1.1"/><path d="M4 2 V7 M6.5 2 V7 M9 2 V7 M11.5 2 V7" stroke="#cfcfcf" stroke-width="0.9"/><rect x="1.5" y="9" width="11" height="6" rx="1" fill="none" stroke="#cfcfcf" stroke-width="1.1"/><circle cx="14.5" cy="13.5" r="4.5" fill="#37373c" stroke="#e0e0e0" stroke-width="1.2"/><path d="M12 12.3 H17 M17 14.7 H12" stroke="#e0e0e0" stroke-width="1"/></svg>
<svg style="left:389px;top:202px;" width="16" height="16" viewBox="0 0 16 16"><path d="M15.80 8.00 L15.71 8.51 L15.44 8.98 L15.04 9.40 L14.57 9.76 L14.08 10.06 L13.63 10.33 L13.27 10.60 L13.02 10.90 L12.89 11.26 L12.83 11.71 L12.82 12.23 L12.81 12.81 L12.74 13.40 L12.57 13.96 L12.29 14.42 L11.90 14.75 L11.42 14.93 L10.87 14.94 L10.31 14.80 L9.76 14.57 L9.25 14.29 L8.80 14.04 L8.38 13.86 L8.00 13.80 L7.62 13.86 L7.20 14.04 L6.75 14.29 L6.24 14.57 L5.69 14.80 L5.13 14.94 L4.58 14.93 L4.10 14.75 L3.71 14.42 L3.43 13.96 L3.26 13.40 L3.19 12.81 L3.18 12.23 L3.17 11.71 L3.11 11.26 L2.98 10.90 L2.73 10.60 L2.37 10.33 L1.92 10.06 L1.43 9.76 L0.96 9.40 L0.56 8.98 L0.29 8.51 L0.20 8.00 L0.29 7.49 L0.56 7.02 L0.96 6.60 L1.43 6.24 L1.92 5.94 L2.37 5.67 L2.73 5.40 L2.98 5.10 L3.11 4.74 L3.17 4.29 L3.18 3.77 L3.19 3.19 L3.26 2.60 L3.43 2.04 L3.71 1.58 L4.10 1.25 L4.58 1.07 L5.13 1.06 L5.69 1.20 L6.24 1.43 L6.75 1.71 L7.20 1.96 L7.62 2.14 L8.00 2.20 L8.38 2.14 L8.80 1.96 L9.25 1.71 L9.76 1.43 L10.31 1.20 L10.87 1.06 L11.42 1.07 L11.90 1.25 L12.29 1.58 L12.57 2.04 L12.74 2.60 L12.81 3.19 L12.82 3.77 L12.83 4.29 L12.89 4.74 L13.02 5.10 L13.27 5.40 L13.63 5.67 L14.08 5.94 L14.57 6.24 L15.04 6.60 L15.44 7.02 L15.71 7.49 Z" fill="none" stroke="#b4b4b4" stroke-width="1.1"/><circle cx="8.0" cy="8.0" r="2.7" fill="none" stroke="#b4b4b4" stroke-width="1.1"/></svg>
<div style="left:8px;top:250px;width:20px;height:20px;background:#3fa1f3;"></div>
<div style="left:14.50px;top:254px;font-size:13px;line-height:13px;color:#0c2740;white-space:pre;">1</div>
<div style="left:33px;top:245px;width:148px;height:30px;box-sizing:border-box;border:1px solid #505056;background:transparent;"></div>
<svg style="left:40px;top:257.5px;" width="11" height="6" viewBox="0 0 11 6"><path d="M0.8 0.8 L5.5 5 L10.2 0.8" fill="none" stroke="#bdbdbd" stroke-width="1.1"/></svg>
<div style="left:54.50px;top:253px;font-size:13px;line-height:13px;color:#ececec;letter-spacing:-0.022px;white-space:pre;">Bambu PLA Silk+</div>
<svg style="left:186.5px;top:251.5px;" width="15" height="15" viewBox="0 0 15 15"><path d="M8 1.5 H3.5 Q1.5 1.5 1.5 3.5 V11.5 Q1.5 13.5 3.5 13.5 H11.5 Q13.5 13.5 13.5 11.5 V7.5" fill="none" stroke="#8c8c8c" stroke-width="1.1"/><path d="M7.5 7.5 L13.5 1.5" stroke="#8c8c8c" stroke-width="1.1"/></svg>
<div style="left:218px;top:250px;width:20px;height:20px;background:#141414;"></div>
<div style="left:224.00px;top:254px;font-size:13px;line-height:13px;color:#ffffff;white-space:pre;">2</div>
<div style="left:243px;top:245px;width:148px;height:30px;box-sizing:border-box;border:1px solid #505056;background:transparent;"></div>
<svg style="left:250px;top:257.5px;" width="11" height="6" viewBox="0 0 11 6"><path d="M0.8 0.8 L5.5 5 L10.2 0.8" fill="none" stroke="#bdbdbd" stroke-width="1.1"/></svg>
<div style="left:264.00px;top:253px;font-size:13px;line-height:13px;color:#ececec;letter-spacing:-0.022px;white-space:pre;">Bambu PLA Silk+</div>
<svg style="left:396.5px;top:251.5px;" width="15" height="15" viewBox="0 0 15 15"><path d="M8 1.5 H3.5 Q1.5 1.5 1.5 3.5 V11.5 Q1.5 13.5 3.5 13.5 H11.5 Q13.5 13.5 13.5 11.5 V7.5" fill="none" stroke="#8c8c8c" stroke-width="1.1"/><path d="M7.5 7.5 L13.5 1.5" stroke="#8c8c8c" stroke-width="1.1"/></svg>
<div style="left:8px;top:284px;width:20px;height:20px;background:#a3a3a3;"></div>
<div style="left:14.00px;top:288px;font-size:13px;line-height:13px;color:#111111;white-space:pre;">3</div>
<div style="left:33px;top:279px;width:148px;height:30px;box-sizing:border-box;border:1px solid #505056;background:transparent;"></div>
<svg style="left:40px;top:291.5px;" width="11" height="6" viewBox="0 0 11 6"><path d="M0.8 0.8 L5.5 5 L10.2 0.8" fill="none" stroke="#bdbdbd" stroke-width="1.1"/></svg>
<div style="left:54.50px;top:287px;font-size:13px;line-height:13px;color:#ececec;letter-spacing:-0.022px;white-space:pre;">Bambu PLA Silk+</div>
<svg style="left:186.5px;top:285.5px;" width="15" height="15" viewBox="0 0 15 15"><path d="M8 1.5 H3.5 Q1.5 1.5 1.5 3.5 V11.5 Q1.5 13.5 3.5 13.5 H11.5 Q13.5 13.5 13.5 11.5 V7.5" fill="none" stroke="#8c8c8c" stroke-width="1.1"/><path d="M7.5 7.5 L13.5 1.5" stroke="#8c8c8c" stroke-width="1.1"/></svg>
<div style="left:0px;top:327px;width:420px;height:30px;background:#37373c;"></div>
<svg style="left:10px;top:334px;" width="18" height="16" viewBox="0 0 18 16"><path d="M2 4 L6 1 H16 L12 4 Z" fill="none" stroke="#9a9a9a" stroke-width="1.1"/><path d="M2 8 L6 5 M16 5 L12 8 H2" fill="none" stroke="#22b14c" stroke-width="1.3"/><path d="M2 12 L6 9 M16 9 L12 12 H2" fill="none" stroke="#9a9a9a" stroke-width="1.1"/></svg>
<div style="left:38.00px;top:333px;font-size:16px;line-height:16px;color:#f0f0f0;letter-spacing:-0.800px;white-space:pre;">Process</div>
<div style="left:105px;top:331.5px;width:102px;height:21px;background:#2a2a2e;border-radius:10.5px"></div>
<div style="left:105px;top:331.5px;width:53px;height:21px;background:#22a652;border-radius:10.5px"></div>
<div style="left:114.00px;top:335px;font-size:13px;line-height:13px;color:#eaffea;letter-spacing:-0.716px;white-space:pre;">Global</div>
<div style="left:160.00px;top:335px;font-size:13px;line-height:13px;color:#8e8e93;letter-spacing:-0.512px;white-space:pre;">Objects</div>
<div style="left:266.00px;top:333px;font-size:16px;line-height:16px;color:#f0f0f0;letter-spacing:-0.595px;white-space:pre;">Advanced</div>
<div style="left:336px;top:334px;width:28px;height:16px;background:#17ad45;border-radius:8px"></div>
<div style="left:349px;top:335px;width:14px;height:14px;background:#ffffff;border-radius:7px"></div>
<svg style="left:376px;top:333px;" width="19" height="18" viewBox="0 0 19 18"><rect x="1" y="1" width="17" height="16" rx="2" fill="none" stroke="#c4c4c4" stroke-width="1.1"/><path d="M4 5 H5 M7 5 H15 M4 9 H5 M7 9 H15 M4 13 H5 M7 13 H15" stroke="#c4c4c4" stroke-width="1.2"/></svg>
<svg style="left:396px;top:334px;" width="16" height="16" viewBox="0 0 16 16"><circle cx="4" cy="4" r="2.6" fill="none" stroke="#2fb058" stroke-width="1.2"/><circle cx="12.5" cy="4.5" r="1.8" fill="none" stroke="#2fb058" stroke-width="1.1"/><circle cx="4" cy="12.5" r="1.8" fill="none" stroke="#2fb058" stroke-width="1.1"/><path d="M6 6 L14 14 M9 8 L12 5" stroke="#2fb058" stroke-width="1.2"/></svg>
<svg style="left:5px;top:375px;" width="16" height="15" viewBox="0 0 16 15"><path d="M8 2.2 A5.8 5.8 0 1 0 13.8 8" fill="none" stroke="#e8734c" stroke-width="1.2"/><path d="M11.3 7 L13.8 10.2 L16.2 7 Z" fill="#e8734c"/></svg>
<div style="left:29px;top:367px;width:325px;height:30px;box-sizing:border-box;border:1px solid #505056;background:transparent;"></div>
<svg style="left:37px;top:379.5px;" width="11" height="6" viewBox="0 0 11 6"><path d="M0.8 0.8 L5.5 5 L10.2 0.8" fill="none" stroke="#bdbdbd" stroke-width="1.1"/></svg>
<div style="left:50.00px;top:374px;font-size:15px;line-height:15px;color:#ececec;letter-spacing:0.129px;white-space:pre;">* 0.20mm Standard @BBL X1C</div>
<svg style="left:371px;top:375px;" width="14" height="14" viewBox="0 0 14 14"><path d="M1.5 1.5 H10 L12.5 4 V12.5 H1.5 Z" fill="none" stroke="#c4c4c4" stroke-width="1.1"/><path d="M4 1.5 V4.5 H9 V1.5 M3.5 12.5 V8.5 H10.5 V12.5" fill="none" stroke="#c4c4c4" stroke-width="1"/></svg>
<svg style="left:394px;top:374px;" width="17" height="17" viewBox="0 0 17 17"><circle cx="7" cy="7" r="5.5" fill="none" stroke="#c4c4c4" stroke-width="1.2"/><path d="M11 11 L16 16" stroke="#c4c4c4" stroke-width="1.3"/></svg>
<div style="left:11.50px;top:411px;font-size:16px;line-height:16px;color:#858589;letter-spacing:-0.133px;white-space:pre;">Quality</div>
<div style="left:91.00px;top:411px;font-size:16px;line-height:16px;color:#858589;letter-spacing:0.073px;white-space:pre;">Strength</div>
<div style="left:183.00px;top:411px;font-size:16px;line-height:16px;color:#858589;letter-spacing:-1.067px;white-space:pre;">Speed</div>
<div style="left:257.00px;top:411px;font-size:16px;line-height:16px;color:#ef7350;font-weight:bold;letter-spacing:-0.720px;white-space:pre;">Support</div>
<div style="left:345.00px;top:411px;font-size:16px;line-height:16px;color:#858589;letter-spacing:-0.203px;white-space:pre;">Others</div>
<div style="left:0px;top:430px;width:420px;height:1px;background:#505055;"></div>
<div style="left:403px;top:437px;width:17px;height:643px;background:#1f1f22;"></div>
<div style="left:411px;top:454px;width:2.5px;height:406px;background:#8e8e92;border-radius:1px"></div>
<svg style="left:5px;top:442px;" width="18" height="18" viewBox="0 0 18 18"><rect x="1" y="1" width="15" height="15" fill="none" stroke="#ececec" stroke-width="1.3"/><path d="M1 5 H16 M10 5 V16" stroke="#ececec" stroke-width="1.3"/><path d="M2 15 L9 8 M2 11 L6 7" stroke="#9c9c9c" stroke-width="1"/></svg>
<div style="left:28.00px;top:443px;font-size:16px;line-height:16px;color:#f6f6f6;font-weight:bold;letter-spacing:-0.720px;white-space:pre;">Support</div>
<div style="left:90px;top:450.5px;width:308px;height:1px;background:#4d4d52;"></div>
<div style="left:25.50px;top:475px;font-size:16px;line-height:16px;color:#ee7050;letter-spacing:-0.164px;white-space:pre;">Enable support</div>
<svg style="left:227px;top:476px;" width="16" height="15" viewBox="0 0 16 15"><path d="M8 2.2 A5.8 5.8 0 1 0 13.8 8" fill="none" stroke="#e8734c" stroke-width="1.2"/><path d="M11.3 7 L13.8 10.2 L16.2 7 Z" fill="#e8734c"/></svg>
<div style="left:246px;top:475px;width:16px;height:16px;background:#1fae4b;border-radius:1px"></div>
<svg style="left:246px;top:475px;" width="16" height="16" viewBox="0 0 16 16"><path d="M3.5 8 L6.8 11 L12.5 5" fill="none" stroke="#ffffff" stroke-width="1.6"/></svg>
<div style="left:25.00px;top:506px;font-size:16px;line-height:16px;color:#d2d2d2;letter-spacing:-0.230px;white-space:pre;">Type</div>
<div style="left:245px;top:500px;width:120px;height:26px;box-sizing:border-box;border:1px solid #505056;background:transparent;"></div>
<svg style="left:252px;top:510.5px;" width="11" height="6" viewBox="0 0 11 6"><path d="M0.8 0.8 L5.5 5 L10.2 0.8" fill="none" stroke="#bdbdbd" stroke-width="1.1"/></svg>
<div style="left:266.40px;top:506px;font-size:15px;line-height:15px;color:#ececec;letter-spacing:0.451px;white-space:pre;">normal(auto)</div>
<div style="left:25.00px;top:536px;font-size:16px;line-height:16px;color:#d2d2d2;letter-spacing:-0.143px;white-space:pre;">Style</div>
<div style="left:245px;top:530px;width:120px;height:26px;box-sizing:border-box;border:1px solid #505056;background:transparent;"></div>
<svg style="left:252px;top:540.5px;" width="11" height="6" viewBox="0 0 11 6"><path d="M0.8 0.8 L5.5 5 L10.2 0.8" fill="none" stroke="#bdbdbd" stroke-width="1.1"/></svg>
<div style="left:266.40px;top:536px;font-size:15px;line-height:15px;color:#ececec;letter-spacing:0.329px;white-space:pre;">Default</div>
<div style="left:25.00px;top:566px;font-size:16px;line-height:16px;color:#d2d2d2;letter-spacing:-0.196px;white-space:pre;">Threshold angle</div>
<div style="left:245px;top:560px;width:120px;height:26px;box-sizing:border-box;border:1px solid #505056;background:transparent;"></div>
<svg style="left:250px;top:563px;" width="10" height="20" viewBox="0 0 10 20"><path d="M1.5 6 L5 2.5 L8.5 6" fill="none" stroke="#bbbbbb" stroke-width="1.1"/><path d="M0 10.5 H10" stroke="#5c5c60" stroke-width="1"/><path d="M1.5 15 L5 18.5 L8.5 15" fill="none" stroke="#bbbbbb" stroke-width="1.1"/></svg>
<div style="left:269.00px;top:566px;font-size:15px;line-height:15px;color:#ececec;letter-spacing:-0.185px;white-space:pre;">30</div>
<div style="left:354.00px;top:563px;font-size:11px;line-height:11px;color:#9a9a9a;white-space:pre;">°</div>
<div style="left:25.00px;top:596px;font-size:16px;line-height:16px;color:#d2d2d2;letter-spacing:-0.030px;white-space:pre;">On build plate only</div>
<div style="left:246px;top:595px;width:16px;height:16px;box-sizing:border-box;border:1px solid #c8c8c8;background:transparent;"></div>
<div style="left:25.00px;top:626px;font-size:16px;line-height:16px;color:#d2d2d2;letter-spacing:-0.359px;white-space:pre;">Remove small overhangs</div>
<div style="left:246px;top:625px;width:16px;height:16px;background:#1fae4b;border-radius:1px"></div>
<svg style="left:246px;top:625px;" width="16" height="16" viewBox="0 0 16 16"><path d="M3.5 8 L6.8 11 L12.5 5" fill="none" stroke="#ffffff" stroke-width="1.6"/></svg>
<svg style="left:5px;top:659px;" width="18" height="18" viewBox="0 0 18 18"><rect x="1" y="2" width="15" height="12" fill="none" stroke="#ececec" stroke-width="1.3"/><path d="M1 14 H16" stroke="#ececec" stroke-width="2"/><path d="M2 16 H15" stroke="#9c9c9c" stroke-width="1.2"/></svg>
<div style="left:28.00px;top:660px;font-size:16px;line-height:16px;color:#f6f6f6;font-weight:bold;letter-spacing:-0.370px;white-space:pre;">Raft</div>
<div style="left:63px;top:667.5px;width:335px;height:1px;background:#4d4d52;"></div>
<div style="left:25.00px;top:692px;font-size:16px;line-height:16px;color:#d2d2d2;letter-spacing:-0.347px;white-space:pre;">Raft layers</div>
<div style="left:245px;top:686px;width:120px;height:26px;box-sizing:border-box;border:1px solid #505056;background:transparent;"></div>
<svg style="left:250px;top:689px;" width="10" height="20" viewBox="0 0 10 20"><path d="M1.5 6 L5 2.5 L8.5 6" fill="none" stroke="#bbbbbb" stroke-width="1.1"/><path d="M0 10.5 H10" stroke="#5c5c60" stroke-width="1"/><path d="M1.5 15 L5 18.5 L8.5 15" fill="none" stroke="#bbbbbb" stroke-width="1.1"/></svg>
<div style="left:269.00px;top:692px;font-size:15px;line-height:15px;color:#ececec;white-space:pre;">0</div>
<div style="left:328.00px;top:694px;font-size:11.5px;line-height:11.5px;color:#8f8f8f;letter-spacing:0.265px;white-space:pre;">layers</div>
<svg style="left:5px;top:725px;" width="18" height="18" viewBox="0 0 18 18"><path d="M3 2 Q0 9 3 16 M14 2 Q17 9 14 16 M6 2 Q3.5 9 6 16 M8.5 2 Q6 9 8.5 16 M11 2 Q8.5 9 11 16" fill="none" stroke="#bdbdbd" stroke-width="1"/></svg>
<div style="left:27.00px;top:725px;font-size:16px;line-height:16px;color:#f6f6f6;font-weight:bold;letter-spacing:-0.611px;white-space:pre;">Filament for Supports</div>
<div style="left:186px;top:733px;width:212px;height:1px;background:#4d4d52;"></div>
<div style="left:25.00px;top:758px;font-size:16px;line-height:16px;color:#d2d2d2;letter-spacing:0.078px;white-space:pre;">Support/raft base</div>
<div style="left:245px;top:752px;width:120px;height:26px;box-sizing:border-box;border:1px solid #505056;background:transparent;"></div>
<svg style="left:252px;top:762.5px;" width="11" height="6" viewBox="0 0 11 6"><path d="M0.8 0.8 L5.5 5 L10.2 0.8" fill="none" stroke="#bdbdbd" stroke-width="1.1"/></svg>
<div style="left:266.40px;top:758px;font-size:15px;line-height:15px;color:#ececec;letter-spacing:0.329px;white-space:pre;">Default</div>
<div style="left:25.00px;top:788px;font-size:16px;line-height:16px;color:#d2d2d2;letter-spacing:0.171px;white-space:pre;">Support/raft interface</div>
<div style="left:245px;top:782px;width:120px;height:26px;box-sizing:border-box;border:1px solid #505056;background:transparent;"></div>
<svg style="left:252px;top:792.5px;" width="11" height="6" viewBox="0 0 11 6"><path d="M0.8 0.8 L5.5 5 L10.2 0.8" fill="none" stroke="#bdbdbd" stroke-width="1.1"/></svg>
<div style="left:266.40px;top:788px;font-size:15px;line-height:15px;color:#ececec;letter-spacing:0.329px;white-space:pre;">Default</div>
<svg style="left:5px;top:820px;" width="18" height="18" viewBox="0 0 18 18"><circle cx="8" cy="8" r="5" fill="none" stroke="#cfcfcf" stroke-width="1.2" stroke-dasharray="2.2 1.4"/><circle cx="8" cy="8" r="2" fill="none" stroke="#cfcfcf" stroke-width="1.1"/><circle cx="13.5" cy="13.5" r="3.3" fill="#2d2d32" stroke="#cfcfcf" stroke-width="1.1" stroke-dasharray="1.6 1"/></svg>
<div style="left:28.00px;top:821px;font-size:16px;line-height:16px;color:#f6f6f6;font-weight:bold;letter-spacing:-0.924px;white-space:pre;">Advanced</div>
<div style="left:103px;top:829.3px;width:295px;height:1px;background:#4d4d52;"></div>
<div style="left:25.00px;top:854px;font-size:16px;line-height:16px;color:#d2d2d2;letter-spacing:0.019px;white-space:pre;">Initial layer density</div>
<div style="left:245px;top:848px;width:120px;height:26px;box-sizing:border-box;border:1px solid #505056;background:transparent;"></div>
<div style="left:253.00px;top:854px;font-size:15px;line-height:15px;color:#ececec;letter-spacing:0.315px;white-space:pre;">90</div>
<div style="left:346.00px;top:858px;font-size:11.5px;line-height:11.5px;color:#8f8f8f;white-space:pre;">%</div>
<div style="left:25.00px;top:884px;font-size:16px;line-height:16px;color:#d2d2d2;letter-spacing:-0.176px;white-space:pre;">Initial layer expansion</div>
<div style="left:245px;top:878px;width:120px;height:26px;box-sizing:border-box;border:1px solid #505056;background:transparent;"></div>
<div style="left:253.00px;top:884px;font-size:15px;line-height:15px;color:#ececec;white-space:pre;">2</div>
<div style="left:335.00px;top:888px;font-size:11.5px;line-height:11.5px;color:#8f8f8f;white-space:pre;">mm</div>
<div style="left:25.00px;top:914px;font-size:16px;line-height:16px;color:#d2d2d2;letter-spacing:0.015px;white-space:pre;">Support wall loops</div>
<div style="left:245px;top:908px;width:120px;height:26px;box-sizing:border-box;border:1px solid #505056;background:transparent;"></div>
<svg style="left:250px;top:911px;" width="10" height="20" viewBox="0 0 10 20"><path d="M1.5 6 L5 2.5 L8.5 6" fill="none" stroke="#bbbbbb" stroke-width="1.1"/><path d="M0 10.5 H10" stroke="#5c5c60" stroke-width="1"/><path d="M1.5 15 L5 18.5 L8.5 15" fill="none" stroke="#bbbbbb" stroke-width="1.1"/></svg>
<div style="left:269.00px;top:914px;font-size:15px;line-height:15px;color:#ececec;white-space:pre;">0</div>
<div style="left:25.00px;top:944px;font-size:16px;line-height:16px;color:#d2d2d2;letter-spacing:-0.158px;white-space:pre;">Top Z distance</div>
<div style="left:245px;top:938px;width:120px;height:26px;box-sizing:border-box;border:1px solid #505056;background:transparent;"></div>
<div style="left:253.00px;top:944px;font-size:15px;line-height:15px;color:#ececec;letter-spacing:-0.426px;white-space:pre;">0.2</div>
<div style="left:335.00px;top:948px;font-size:11.5px;line-height:11.5px;color:#8f8f8f;white-space:pre;">mm</div>
<div style="left:25.00px;top:974px;font-size:16px;line-height:16px;color:#d2d2d2;letter-spacing:-0.059px;white-space:pre;">Bottom Z distance</div>
<div style="left:245px;top:968px;width:120px;height:26px;box-sizing:border-box;border:1px solid #505056;background:transparent;"></div>
<div style="left:253.00px;top:974px;font-size:15px;line-height:15px;color:#ececec;letter-spacing:-0.426px;white-space:pre;">0.2</div>
<div style="left:335.00px;top:978px;font-size:11.5px;line-height:11.5px;color:#8f8f8f;white-space:pre;">mm</div>
<div style="left:25.00px;top:1004px;font-size:16px;line-height:16px;color:#d2d2d2;letter-spacing:-0.248px;white-space:pre;">Base pattern</div>
<div style="left:245px;top:998px;width:120px;height:26px;box-sizing:border-box;border:1px solid #505056;background:transparent;"></div>
<svg style="left:252px;top:1008.5px;" width="11" height="6" viewBox="0 0 11 6"><path d="M0.8 0.8 L5.5 5 L10.2 0.8" fill="none" stroke="#bdbdbd" stroke-width="1.1"/></svg>
<div style="left:266.40px;top:1004px;font-size:15px;line-height:15px;color:#ececec;letter-spacing:0.329px;white-space:pre;">Default</div>
<div style="left:25.00px;top:1034px;font-size:16px;line-height:16px;color:#d2d2d2;letter-spacing:-0.228px;white-space:pre;">Base pattern spacing</div>
<div style="left:245px;top:1028px;width:120px;height:26px;box-sizing:border-box;border:1px solid #505056;background:transparent;"></div>
<div style="left:253.00px;top:1034px;font-size:15px;line-height:15px;color:#ececec;letter-spacing:-0.426px;white-space:pre;">2.5</div>
<div style="left:335.00px;top:1038px;font-size:11.5px;line-height:11.5px;color:#8f8f8f;white-space:pre;">mm</div>
<div style="left:25.00px;top:1064px;font-size:16px;line-height:16px;color:#d2d2d2;letter-spacing:-0.099px;white-space:pre;">Pattern angle</div>
<div style="left:245px;top:1058px;width:120px;height:26px;box-sizing:border-box;border:1px solid #505056;background:transparent;"></div>
<div style="left:253.00px;top:1064px;font-size:15px;line-height:15px;color:#ececec;white-space:pre;">0</div>
<div style="left:350.00px;top:1061px;font-size:11px;line-height:11px;color:#9a9a9a;white-space:pre;">°</div>
<div style="left:0px;top:0px;width:1920px;height:31px;background:#0c0c0c;"></div>
<div style="left:1px;top:1px;width:1917px;height:28px;background:#262b2e;"></div>
<div style="left:14px;top:8px;width:16px;height:2px;background:#e6e6e6;border-radius:1px"></div>
<div style="left:14px;top:14px;width:16px;height:2px;background:#e6e6e6;border-radius:1px"></div>
<div style="left:14px;top:20px;width:16px;height:2px;background:#e6e6e6;border-radius:1px"></div>
<div style="left:34.00px;top:9px;font-size:13px;line-height:13px;color:#f0f0f0;letter-spacing:-0.983px;white-space:pre;">File</div>
<svg style="left:73px;top:11px;" width="14" height="8" viewBox="0 0 14 8"><path d="M1.5 1.5 L7 6.5 L12.5 1.5" fill="none" stroke="#e0e0e0" stroke-width="1.5"/></svg>
<div style="left:105px;top:4px;width:1px;height:23px;background:#55595c;"></div>
<svg style="left:128px;top:6px;" width="18" height="18" viewBox="0 0 18 18"><path d="M2 2 H12 L16 6 V15 Q16 16 15 16 H3 Q2 16 2 15 Z" fill="none" stroke="#e8e8e8" stroke-width="1.6"/><rect x="5" y="2" width="6" height="4" fill="#e8e8e8"/><rect x="4.5" y="10.5" width="9" height="5" fill="#e8e8e8"/></svg>
<svg style="left:167px;top:8px;" width="18" height="14" viewBox="0 0 18 14"><path d="M1 6 L7 1 V4 Q15 4 17 13 Q13 8 7 8.5 V11 Z" fill="#8f8f8f"/></svg>
<svg style="left:206px;top:8px;" width="18" height="14" viewBox="0 0 18 14"><path d="M17 6 L11 1 V4 Q3 4 1 13 Q5 8 11 8.5 V11 Z" fill="#8f8f8f"/></svg>
<svg style="left:244px;top:6px;" width="19" height="18" viewBox="0 0 19 18"><rect x="3.5" y="4" width="12" height="10" fill="none" stroke="#8a8a8a" stroke-width="1.5"/><path d="M9.5 0 V18 M0 9 H19" stroke="#8a8a8a" stroke-width="1.5"/></svg>
<div style="left:266.00px;top:9px;font-size:13px;line-height:13px;color:#8d8d8d;letter-spacing:-0.615px;white-space:pre;">Calibration</div>
<div style="left:1038.00px;top:10px;font-size:13px;line-height:13px;color:#eeeeee;letter-spacing:-0.297px;white-space:pre;">Untitled</div>
<div style="left:1829px;top:14px;width:11px;height:1.5px;background:#d8d8d8;"></div>
<svg style="left:1859px;top:8px;" width="16" height="14" viewBox="0 0 16 14"><rect x="1" y="1" width="10" height="8" rx="1.5" fill="none" stroke="#d0d0d0" stroke-width="1.2"/><rect x="4" y="4.5" width="10.5" height="8.5" rx="1.5" fill="#262b2e" stroke="#d0d0d0" stroke-width="1.2"/></svg>
<svg style="left:1895px;top:9px;" width="12" height="12" viewBox="0 0 12 12"><path d="M1 1 L11 11 M11 1 L1 11" stroke="#e0e0e0" stroke-width="1.3"/></svg>
<div style="left:0px;top:31px;width:1920px;height:36px;background:#2c2c30;"></div>
<svg style="left:10px;top:38px;" width="22" height="22" viewBox="0 0 22 22"><path d="M11 1 L21 10 H18 V21 H13.5 V15 H8.5 V21 H4 V10 H1 Z" fill="#ffffff"/></svg>
<svg style="left:66px;top:40px;" width="18" height="18" viewBox="0 0 18 18"><path d="M9 1 L17 5 V13 L9 17 L1 13 V5 Z M1 5 L9 9 L17 5 M9 9 V17" fill="none" stroke="#e0e0e0" stroke-width="1.3" stroke-linejoin="round"/></svg>
<div style="left:94.00px;top:41px;font-size:16px;line-height:16px;color:#f2f2f2;letter-spacing:-0.487px;white-space:pre;">Prepare</div>
<div style="left:173px;top:31px;width:132px;height:36px;background:#22a652;"></div>
<svg style="left:198px;top:40px;" width="18" height="18" viewBox="0 0 18 18"><path d="M9 1 L17 5 L9 9 L1 5 Z" fill="none" stroke="#e8ffe8" stroke-width="1.3" stroke-linejoin="round"/><path d="M1 9 L9 13 L17 9 M1 13 L9 17 L17 13" fill="none" stroke="#e8ffe8" stroke-width="1.3" stroke-linejoin="round"/></svg>
<div style="left:226.00px;top:41px;font-size:16px;line-height:16px;color:#f4fff4;letter-spacing:-0.485px;white-space:pre;">Preview</div>
<svg style="left:333px;top:40px;" width="20" height="18" viewBox="0 0 20 18"><rect x="1" y="1" width="7" height="5" fill="none" stroke="#e0e0e0" stroke-width="1.3"/><path d="M4.5 6 V9 M1 9 H8" stroke="#e0e0e0" stroke-width="1.3"/><path d="M12 1 H19 V4 M1 12 V17 H6 M19 12 V17 H12 V12 H19" fill="none" stroke="#e0e0e0" stroke-width="1.3"/><rect x="14" y="13" width="3" height="2" fill="#e0e0e0"/></svg>
<div style="left:363.00px;top:41px;font-size:16px;line-height:16px;color:#f2f2f2;letter-spacing:-0.781px;white-space:pre;">Device</div>
<svg style="left:465px;top:40px;" width="19" height="18" viewBox="0 0 19 18"><rect x="1" y="1" width="17" height="16" rx="2" fill="none" stroke="#e0e0e0" stroke-width="1.3"/><path d="M5 5 H6 M8 5 H14 M5 9 H6 M8 9 H14 M5 13 H6 M8 13 H14" stroke="#e0e0e0" stroke-width="1.3"/></svg>
<div style="left:493.00px;top:41px;font-size:16px;line-height:16px;color:#f2f2f2;letter-spacing:-0.300px;white-space:pre;">Project</div>
<svg style="left:584px;top:42px;" width="14" height="14" viewBox="0 0 14 14"><path d="M7 1 L9 2.5 L12 2.5 L12.5 5 L13.5 7 L12.5 9 L12 11.5 L9 11.5 L7 13 L5 11.5 L2 11.5 L1.5 9 L0.7 7 L1.5 5 L2 2.5 L5 2.5 Z" fill="none" stroke="#e0e0e0" stroke-width="1.2"/><path d="M7 10 V5 M4.8 7 L7 4.6 L9.2 7" fill="none" stroke="#e0e0e0" stroke-width="1.3"/></svg>
<div style="left:611.00px;top:41px;font-size:16px;line-height:16px;color:#f2f2f2;letter-spacing:-0.049px;white-space:pre;">Calibration</div>
<div style="left:1595px;top:37px;width:28px;height:24px;background:#22a652;border-radius:12px 0 0 12px"></div>
<div style="left:1621px;top:37px;width:109px;height:24px;background:#8c8c8f;border-radius:0 12px 12px 0"></div>
<div style="left:1620px;top:37px;width:1px;height:24px;background:#1e1e20;"></div>
<svg style="left:1602px;top:46px;" width="12" height="7" viewBox="0 0 12 7"><path d="M2 1.5 L6 5 L10 1.5" fill="none" stroke="#ffffff" stroke-width="1.4"/></svg>
<div style="left:1636.00px;top:41px;font-size:15px;line-height:15px;color:#f4f4f4;letter-spacing:0.179px;white-space:pre;">Slice plate</div>
<div style="left:1745px;top:37px;width:137px;height:24px;background:#22a652;border-radius:12px"></div>
<div style="left:1769px;top:37px;width:1.5px;height:24px;background:#17602f;"></div>
<svg style="left:1752px;top:46px;" width="12" height="7" viewBox="0 0 12 7"><path d="M2 1.5 L6 5 L10 1.5" fill="none" stroke="#ffffff" stroke-width="1.4"/></svg>
<div style="left:1786.00px;top:41px;font-size:15px;line-height:15px;color:#f4f4f4;letter-spacing:0.546px;white-space:pre;">Print plate</div>
</body></html>
